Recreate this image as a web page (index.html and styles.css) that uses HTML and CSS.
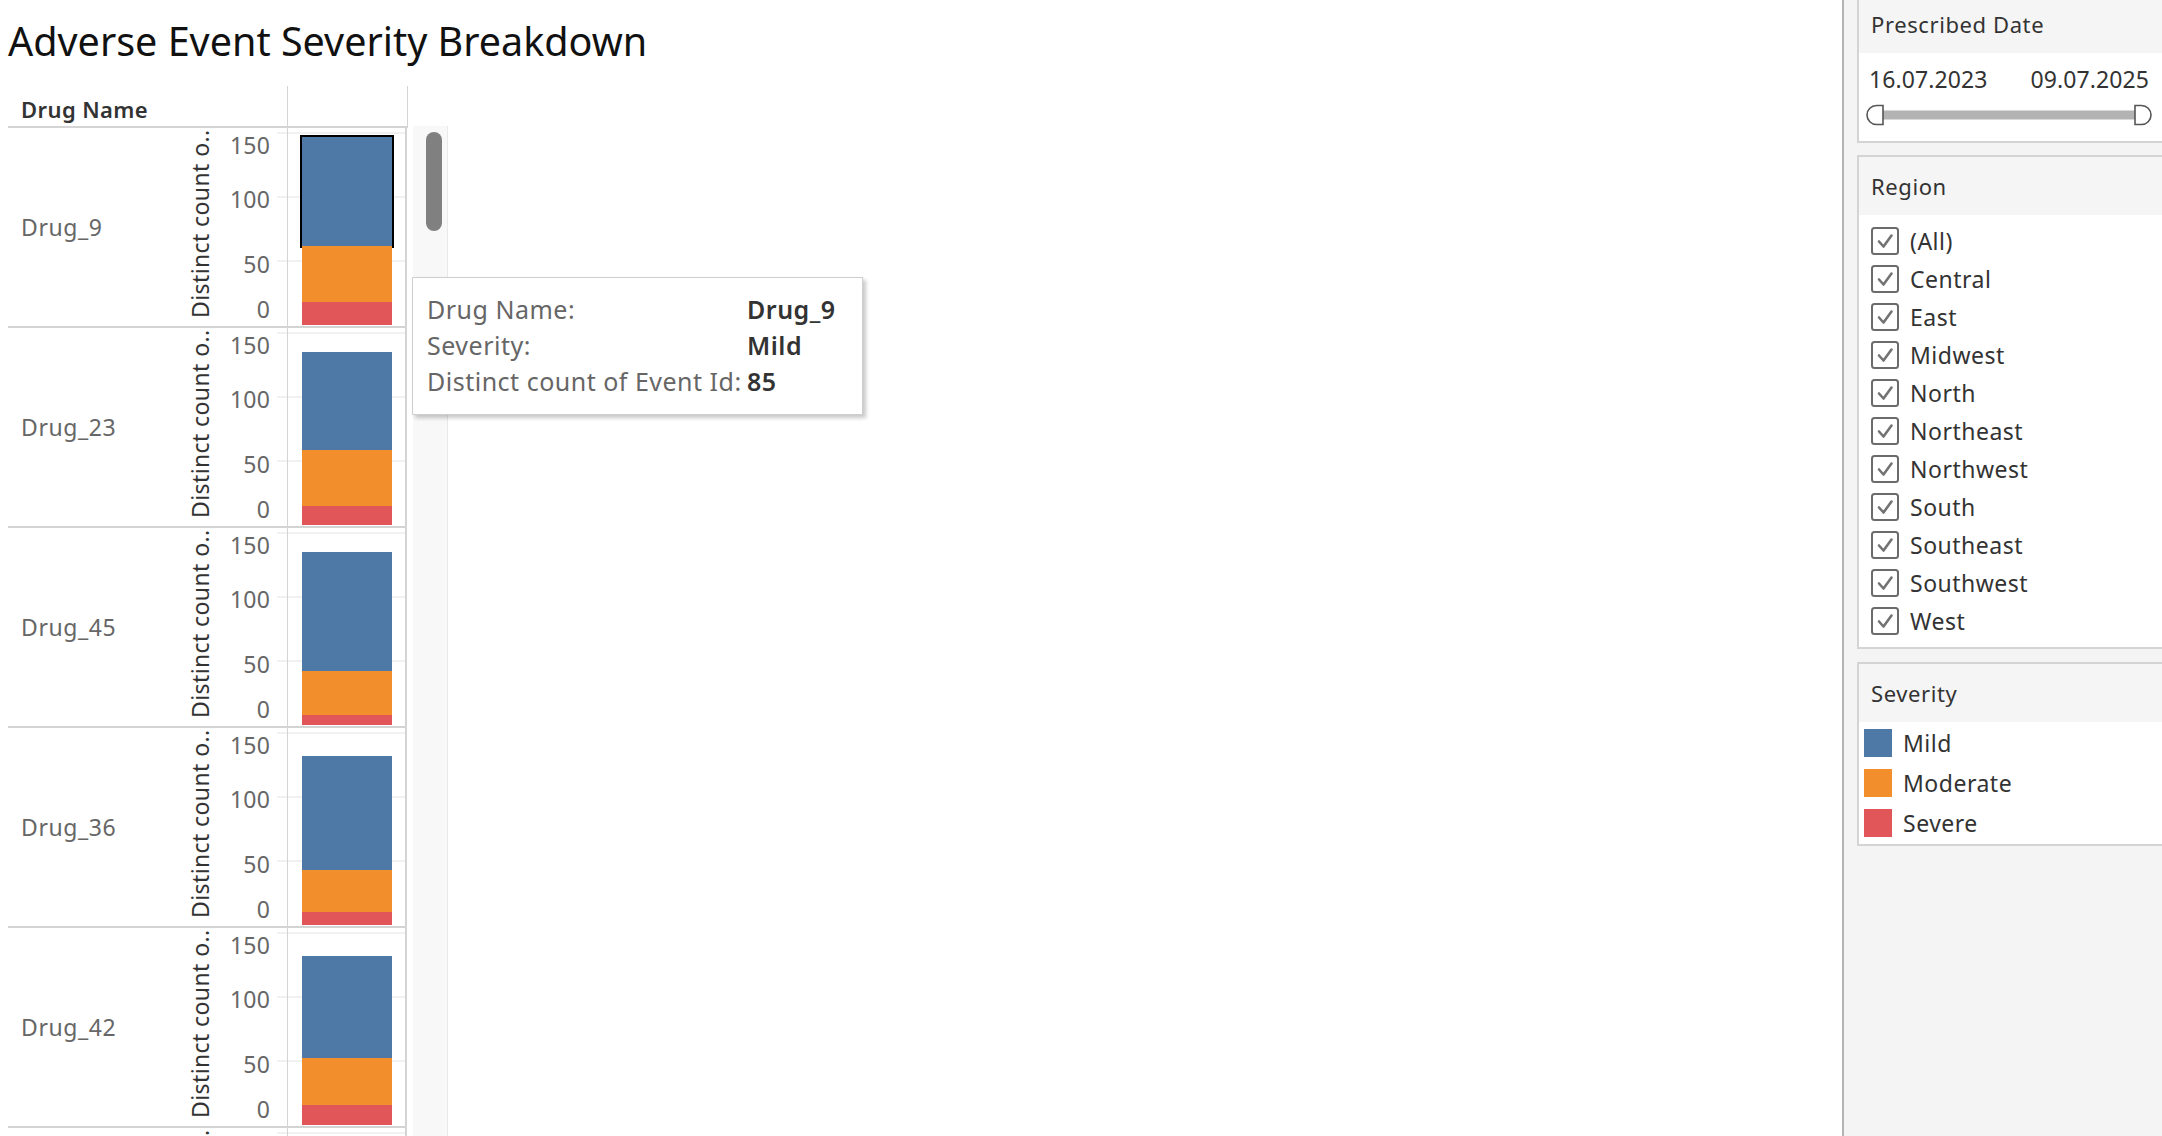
FILE: index.html
```html
<!DOCTYPE html>
<html lang="en">
<head>
<meta charset="utf-8">
<title>Adverse Event Severity Breakdown</title>
<link rel="stylesheet" href="styles.css">
</head>
<body>
<svg class="defs" aria-hidden="true">
  <symbol id="chk" viewBox="0 0 28 28">
    <rect x="1" y="1" width="26" height="26" rx="2.5" fill="#fff" stroke="#6b6b6b" stroke-width="2"/>
    <path d="M8 14.5 L12.5 19.5 L20.5 8.5" fill="none" stroke="#737373" stroke-width="2.6" stroke-linecap="round" stroke-linejoin="round"/>
  </symbol>
</svg>
<div class="app">
  <main class="main">
    <h1 class="title">Adverse Event Severity Breakdown</h1>
    <div class="viz">
      <div class="table">
        <div class="thead">
          <div class="th-name">Drug Name</div>
          <div class="th-pane"></div>
        </div>

        <div class="row">
          <div class="rowhead">
            <span class="drug">Drug_9</span>
            <span class="axis-title">Distinct count o..</span>
            <span class="tick t150">150</span><span class="tick t100">100</span><span class="tick t50">50</span><span class="tick t0">0</span>
            <i class="stub g150"></i><i class="stub g100"></i><i class="stub g50"></i>
          </div>
          <div class="pane">
            <i class="grid g150"></i><i class="grid g100"></i><i class="grid g50"></i>
            <div class="bar">
              <div class="seg mild selected" style="height:108.8px"></div>
              <div class="seg moderate" style="height:56.3px"></div>
              <div class="seg severe" style="height:23px"></div>
            </div>
          </div>
        </div>

        <div class="row">
          <div class="rowhead">
            <span class="drug">Drug_23</span>
            <span class="axis-title">Distinct count o..</span>
            <span class="tick t150">150</span><span class="tick t100">100</span><span class="tick t50">50</span><span class="tick t0">0</span>
            <i class="stub g150"></i><i class="stub g100"></i><i class="stub g50"></i>
          </div>
          <div class="pane">
            <i class="grid g150"></i><i class="grid g100"></i><i class="grid g50"></i>
            <div class="bar">
              <div class="seg mild" style="height:97.3px"></div>
              <div class="seg moderate" style="height:56.3px"></div>
              <div class="seg severe" style="height:19.2px"></div>
            </div>
          </div>
        </div>

        <div class="row">
          <div class="rowhead">
            <span class="drug">Drug_45</span>
            <span class="axis-title">Distinct count o..</span>
            <span class="tick t150">150</span><span class="tick t100">100</span><span class="tick t50">50</span><span class="tick t0">0</span>
            <i class="stub g150"></i><i class="stub g100"></i><i class="stub g50"></i>
          </div>
          <div class="pane">
            <i class="grid g150"></i><i class="grid g100"></i><i class="grid g50"></i>
            <div class="bar">
              <div class="seg mild" style="height:119px"></div>
              <div class="seg moderate" style="height:43.5px"></div>
              <div class="seg severe" style="height:10.2px"></div>
            </div>
          </div>
        </div>

        <div class="row">
          <div class="rowhead">
            <span class="drug">Drug_36</span>
            <span class="axis-title">Distinct count o..</span>
            <span class="tick t150">150</span><span class="tick t100">100</span><span class="tick t50">50</span><span class="tick t0">0</span>
            <i class="stub g150"></i><i class="stub g100"></i><i class="stub g50"></i>
          </div>
          <div class="pane">
            <i class="grid g150"></i><i class="grid g100"></i><i class="grid g50"></i>
            <div class="bar">
              <div class="seg mild" style="height:113.9px"></div>
              <div class="seg moderate" style="height:42.2px"></div>
              <div class="seg severe" style="height:12.8px"></div>
            </div>
          </div>
        </div>

        <div class="row">
          <div class="rowhead">
            <span class="drug">Drug_42</span>
            <span class="axis-title">Distinct count o..</span>
            <span class="tick t150">150</span><span class="tick t100">100</span><span class="tick t50">50</span><span class="tick t0">0</span>
            <i class="stub g150"></i><i class="stub g100"></i><i class="stub g50"></i>
          </div>
          <div class="pane">
            <i class="grid g150"></i><i class="grid g100"></i><i class="grid g50"></i>
            <div class="bar">
              <div class="seg mild" style="height:102.4px"></div>
              <div class="seg moderate" style="height:46.1px"></div>
              <div class="seg severe" style="height:20.5px"></div>
            </div>
          </div>
        </div>

        <div class="row">
          <div class="rowhead">
            <span class="drug">Drug_17</span>
            <span class="axis-title">Distinct count o..</span>
            <span class="tick t150">150</span><span class="tick t100">100</span><span class="tick t50">50</span><span class="tick t0">0</span>
            <i class="stub g150"></i><i class="stub g100"></i><i class="stub g50"></i>
          </div>
          <div class="pane">
            <i class="grid g150"></i><i class="grid g100"></i><i class="grid g50"></i>
            <div class="bar">
              <div class="seg mild" style="height:104px"></div>
              <div class="seg moderate" style="height:50px"></div>
              <div class="seg severe" style="height:15px"></div>
            </div>
          </div>
        </div>
      </div>
      <div class="scrollbar"><div class="thumb"></div></div>
    </div>

    <div class="tooltip">
      <span class="tt-label">Drug Name:</span><span class="tt-value">Drug_9</span>
      <span class="tt-label">Severity:</span><span class="tt-value">Mild</span>
      <span class="tt-label">Distinct count of Event Id:</span><span class="tt-value">85</span>
    </div>
  </main>

  <aside class="panel">
    <section class="card card-date">
      <div class="card-head">Prescribed Date</div>
      <div class="card-body date-body">
        <div class="dates"><span>16.07.2023</span><span>09.07.2025</span></div>
        <svg class="slider" width="286" height="22" viewBox="0 0 286 22">
          <rect x="17" y="6.5" width="252" height="9" fill="#b3b3b3"/>
          <path d="M17 1.5 H10.5 A9.5 9.5 0 0 0 10.5 20.5 H17 Z" fill="#fff" stroke="#555" stroke-width="1.6"/>
          <path d="M269 1.5 H275.5 A9.5 9.5 0 0 1 275.5 20.5 H269 Z" fill="#fff" stroke="#555" stroke-width="1.6"/>
        </svg>
      </div>
    </section>

    <section class="card card-region">
      <div class="card-head">Region</div>
      <div class="card-body check-list">
        <div class="check"><svg class="box" viewBox="0 0 28 28"><use href="#chk"/></svg><span>(All)</span></div>
        <div class="check"><svg class="box" viewBox="0 0 28 28"><use href="#chk"/></svg><span>Central</span></div>
        <div class="check"><svg class="box" viewBox="0 0 28 28"><use href="#chk"/></svg><span>East</span></div>
        <div class="check"><svg class="box" viewBox="0 0 28 28"><use href="#chk"/></svg><span>Midwest</span></div>
        <div class="check"><svg class="box" viewBox="0 0 28 28"><use href="#chk"/></svg><span>North</span></div>
        <div class="check"><svg class="box" viewBox="0 0 28 28"><use href="#chk"/></svg><span>Northeast</span></div>
        <div class="check"><svg class="box" viewBox="0 0 28 28"><use href="#chk"/></svg><span>Northwest</span></div>
        <div class="check"><svg class="box" viewBox="0 0 28 28"><use href="#chk"/></svg><span>South</span></div>
        <div class="check"><svg class="box" viewBox="0 0 28 28"><use href="#chk"/></svg><span>Southeast</span></div>
        <div class="check"><svg class="box" viewBox="0 0 28 28"><use href="#chk"/></svg><span>Southwest</span></div>
        <div class="check"><svg class="box" viewBox="0 0 28 28"><use href="#chk"/></svg><span>West</span></div>
      </div>
    </section>

    <section class="card card-legend">
      <div class="card-head">Severity</div>
      <div class="card-body legend-list">
        <div class="legend"><i class="swatch mild"></i><span>Mild</span></div>
        <div class="legend"><i class="swatch moderate"></i><span>Moderate</span></div>
        <div class="legend"><i class="swatch severe"></i><span>Severe</span></div>
      </div>
    </section>
  </aside>
</div>
</body>
</html>
```

FILE: styles.css
```css
* { box-sizing: border-box; }

html, body {
  margin: 0;
  padding: 0;
  background: #fff;
}

body {
  width: 2162px;
  height: 1136px;
  overflow: hidden;
  font-family: "Noto Sans", "Open Sans", sans-serif;
  color: #333;
}

.defs {
  position: absolute;
  width: 0;
  height: 0;
  overflow: hidden;
}

.app {
  display: flex;
  width: 2162px;
  height: 1136px;
}

/* ---------- main worksheet ---------- */
.main {
  position: relative;
  width: 1842px;
  flex: none;
  height: 1136px;
  overflow: hidden;
}

.title {
  margin: 0;
  height: 86px;
  padding: 14px 0 0 8px;
  font-family: "Noto Sans", "Open Sans", sans-serif;
  font-weight: 400;
  font-size: 39.5px;
  line-height: normal;
  color: #111;
  white-space: nowrap;
}

.viz {
  display: flex;
  align-items: flex-start;
  padding-left: 8px;
}

.table {
  width: 400px;
  flex: none;
}

.thead {
  display: flex;
  height: 42px;
  border-bottom: 2px solid #d4d4d4;
}

.th-name {
  width: 279px;
  padding: 8px 0 0 13px;
  font-size: 22px;
  line-height: 30px;
  font-weight: 600;
  letter-spacing: 0.4px;
  color: #333;
}

.th-pane {
  width: 121px;
  border-left: 1.5px solid #d4d4d4;
  border-right: 1.5px solid #d4d4d4;
}

.row {
  display: flex;
  width: 399px;
  height: 200px;
  border-bottom: 2px solid #d4d4d4;
}

.rowhead {
  position: relative;
  width: 279px;
  height: 198px;
  display: flex;
  align-items: center;
  padding-left: 13px;
}

.drug {
  font-size: 23px;
  line-height: 30px;
  letter-spacing: 0.6px;
  color: #666;
}

.axis-title {
  position: absolute;
  left: 177px;
  top: 190px;
  width: 190px;
  height: 30px;
  transform-origin: 0 0;
  transform: rotate(-90deg);
  font-size: 23px;
  line-height: 30px;
  letter-spacing: 0.4px;
  color: #333;
  white-space: nowrap;
  overflow: hidden;
}

.tick {
  position: absolute;
  right: 17px;
  font-size: 23px;
  line-height: 30px;
  letter-spacing: 0.2px;
  color: #666;
}
.t150 { top: 2px; }
.t100 { top: 56px; }
.t50  { top: 121px; }
.t0   { top: 166px; }

.stub, .grid {
  position: absolute;
  height: 2px;
  background: #f1f1f1;
}
.stub { left: 269px; width: 10px; }
.grid { left: 0; right: 0; }
.g150 { top: 4px; }
.g100 { top: 68px; }
.g50  { top: 132px; }

.pane {
  position: relative;
  width: 120px;
  height: 198px;
  border-left: 1px solid #d4d4d4;
  border-right: 2px solid #d4d4d4;
}

.bar {
  position: absolute;
  left: 14px;
  bottom: 1px;
  width: 90px;
  display: flex;
  flex-direction: column;
}

.seg { width: 100%; flex: none; }
.mild { background: #4e79a7; }
.moderate { background: #f28e2b; }
.severe { background: #e15759; }
.seg.selected {
  outline: 2.5px solid #000;
  outline-offset: -0.5px;
}

.scrollbar {
  width: 35px;
  height: 1010px;
  margin: 40px 0 0 5px;
  padding: 6px 0 0 13px;
  background: #f8f8f8;
  border-right: 1px solid #e9e9e9;
  flex: none;
}

.thumb {
  width: 16px;
  height: 99px;
  border-radius: 8px;
  background: #808080;
}

/* ---------- tooltip ---------- */
.tooltip {
  position: absolute;
  left: 412px;
  top: 277px;
  width: 451px;
  height: 138px;
  padding: 13px 0 0 14px;
  background: #fff;
  border: 1px solid #cfcfcf;
  box-shadow: 3px 3px 4px rgba(0, 0, 0, 0.22);
  display: grid;
  grid-template-columns: 320px auto;
  grid-auto-rows: 36px;
  align-content: start;
  font-size: 25px;
  line-height: 36px;
  white-space: nowrap;
}

.tt-label { color: #666; letter-spacing: 0.5px; }
.tt-value { color: #333; font-weight: 600; letter-spacing: 0.5px; }

/* ---------- right panel ---------- */
.panel {
  flex: none;
  width: 320px;
  height: 1136px;
  background: #f4f4f4;
  border-left: 2px solid #b3b3b3;
  padding-left: 13px;
  overflow: hidden;
}

.card {
  background: #fff;
  border: 2px solid #d4d4d4;
  margin-right: -12px;
}

.card-date { margin-top: -7px; }
.card-region { margin-top: 12px; }
.card-legend { margin-top: 13px; }

.card-head {
  height: 58px;
  padding-left: 12px;
  background: #f5f5f5;
  font-size: 22px;
  line-height: 58px;
  letter-spacing: 0.6px;
  color: #333;
}

.date-body {
  height: 88px;
  padding: 11px 0 0 10px;
}

.dates {
  display: flex;
  justify-content: space-between;
  width: 280px;
  font-size: 23px;
  line-height: 30px;
  letter-spacing: 0.1px;
  color: #333;
}

.slider {
  display: block;
  margin: 10px 0 0 -3px;
}

.check-list {
  padding: 7px 0 7px 12px;
}

.check {
  display: flex;
  align-items: center;
  gap: 11px;
  height: 38px;
  font-size: 23px;
  letter-spacing: 0.5px;
  color: #333;
}

.box {
  width: 28px;
  height: 28px;
  flex: none;
}

.legend-list {
  padding: 1px 0 1px 5px;
}

.legend {
  display: flex;
  align-items: center;
  gap: 11px;
  height: 40px;
  font-size: 23px;
  letter-spacing: 0.5px;
  color: #333;
}

.swatch {
  width: 28px;
  height: 28px;
  flex: none;
}
```
